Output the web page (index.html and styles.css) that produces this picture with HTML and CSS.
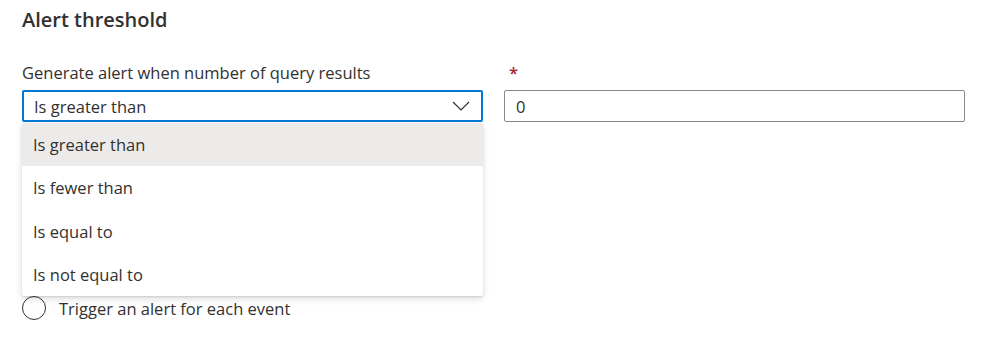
FILE: index.html
```html
<!DOCTYPE html>
<html>
<head>
  <meta charset="utf-8">
  <title>Alert threshold</title>
  <link rel="stylesheet" href="styles.css">
</head>
<body>

<div class="panel">
  <h2 class="title">Alert threshold</h2>

  <div class="row">
    <div class="field">
      <div class="label">Generate alert when number of query results</div>
      <div class="select">
        <span class="select-text">Is greater than</span>
        <svg class="chevron" width="18" height="10" viewBox="0 0 18 10">
          <path d="M1 1 L9 9 L17 1" fill="none" stroke="#323130" stroke-width="1.2"/>
        </svg>
      </div>

      <!-- open list of the select, lies over the radios -->
      <div class="menu">
        <div class="menu-item selected">Is greater than</div>
        <div class="menu-item">Is fewer than</div>
        <div class="menu-item">Is equal to</div>
        <div class="menu-item">Is not equal to</div>
      </div>
    </div>

    <div class="field">
      <div class="label"><span class="required">*</span></div>
      <div class="textbox">0</div>
    </div>
  </div>

  <div class="radios">
    <div class="radio">
      <span class="radio-circle"></span>
      <span class="radio-text">Trigger an alert for each event</span>
    </div>
  </div>
</div>

</body>
</html>
```

FILE: styles.css
```css
/** whole page **/
  body {
    margin: 0px;
    background-color: #FFFFFF;
    color: #323130;
    font-family: "Open Sans", "Noto Sans", sans-serif;
  }

  .panel {
    padding: 6px 22px 0px 22px;
  }

/** section heading **/
  .title {
    margin: 0px;
    font-size: 20px;
    font-weight: 600;
    line-height: 28px;
  }

/** the two fields side by side **/
  .row {
    display: flex;
    gap: 21px;
    margin-top: 28px;
  }

  .field {
    position: relative;
    width: 461px;
  }

  .label {
    height: 28px;
    font-size: 16.5px;
    line-height: 22px;
  }

  .required {
    color: #A4262C;
    margin-left: 5px;
    font-weight: 600;
  }

/** the dropdown **/
  .select {
    display: flex;
    align-items: center;
    justify-content: space-between;
    height: 32px;
    box-sizing: border-box;
    border: 2px solid #0078D4;
    border-radius: 2px;
    padding: 0px 11px 0px 10px;
    font-size: 16.5px;
  }

  .chevron {
    display: block;
  }

/** the text box **/
  .textbox {
    display: flex;
    align-items: center;
    height: 32px;
    box-sizing: border-box;
    border: 1px solid #8A8886;
    border-radius: 2px;
    padding: 0px 11px;
    font-size: 16.5px;
  }

/** open list of the dropdown **/
  .menu {
    position: absolute;
    top: 61px;
    left: 0px;
    right: 0px;
    background-color: #FFFFFF;
    border-radius: 2px;
    box-shadow: 0px 3px 7px rgba(0, 0, 0, 0.13), 0px 1px 2px rgba(0, 0, 0, 0.11);
    z-index: 10;
  }

  .menu-item {
    height: 43.25px;
    display: flex;
    align-items: center;
    padding: 0px 11px;
    font-size: 16.5px;
  }

  .menu-item.selected {
    background-color: #EDEBE9;
  }

/** radio choices under the fields **/
  .radios {
    margin-top: 174px;
  }

  .radio {
    display: flex;
    align-items: center;
    gap: 13px;
    height: 24px;
    font-size: 16.5px;
  }

  .radio-circle {
    width: 24px;
    height: 24px;
    box-sizing: border-box;
    border: 1px solid #323130;
    border-radius: 50%;
  }
```
